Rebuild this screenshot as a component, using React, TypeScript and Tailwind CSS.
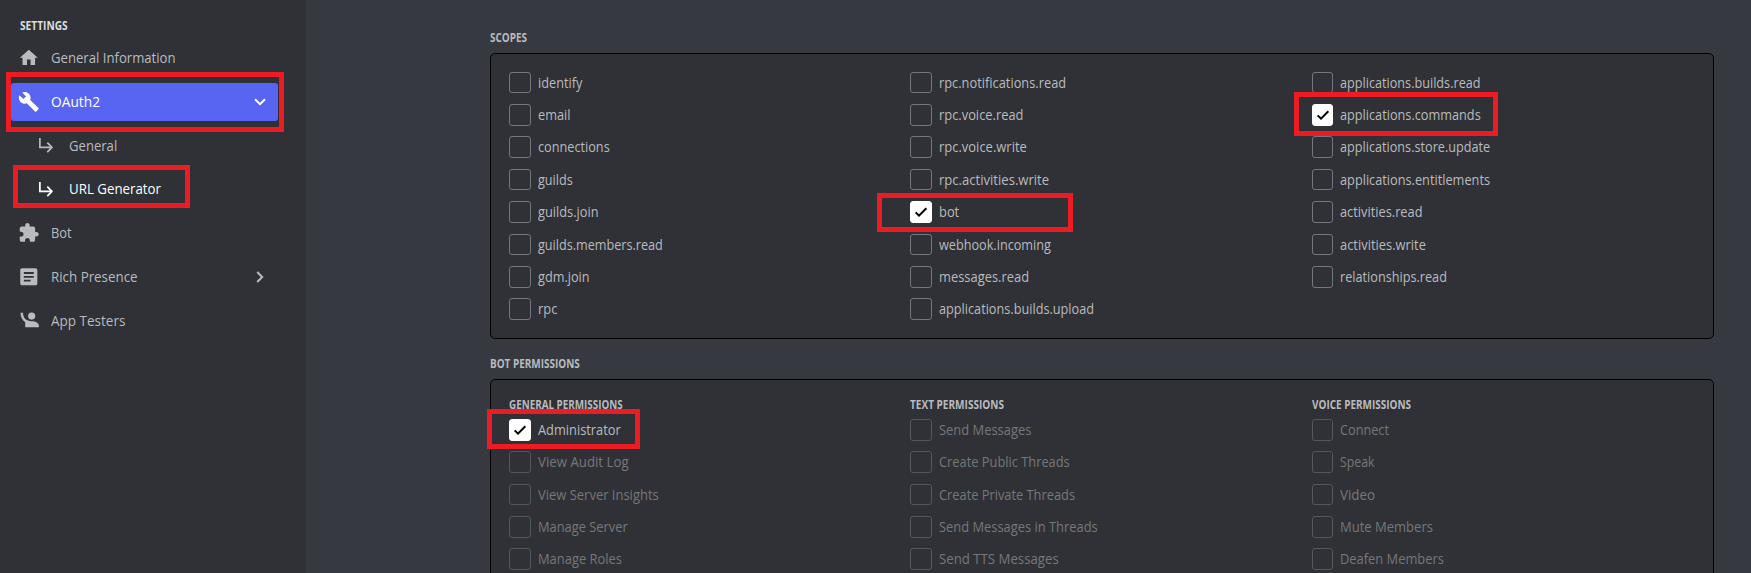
import React from "react";

type Item = { label: string; width: number; checked?: boolean };

const scopes: Item[][] = [
  [
    { label: "identify", width: 44.3 },
    { label: "email", width: 32 },
    { label: "connections", width: 72 },
    { label: "guilds", width: 35 },
    { label: "guilds.join", width: 60 },
    { label: "guilds.members.read", width: 124.3 },
    { label: "gdm.join", width: 51 },
    { label: "rpc", width: 18.7 },
  ],
  [
    { label: "rpc.notifications.read", width: 125.7 },
    { label: "rpc.voice.read", width: 83 },
    { label: "rpc.voice.write", width: 87 },
    { label: "rpc.activities.write", width: 109.3 },
    { label: "bot", width: 19.3, checked: true },
    { label: "webhook.incoming", width: 112.3 },
    { label: "messages.read", width: 88.6 },
    { label: "applications.builds.upload", width: 154.5 },
  ],
  [
    { label: "applications.builds.read", width: 140 },
    { label: "applications.commands", width: 141, checked: true },
    { label: "applications.store.update", width: 150.3 },
    { label: "applications.entitlements", width: 150.3 },
    { label: "activities.read", width: 82 },
    { label: "activities.write", width: 86 },
    { label: "relationships.read", width: 105.5 },
  ],
];

const permissions: { title: string; width: number; items: Item[] }[] = [
  {
    title: "GENERAL PERMISSIONS",
    width: 114,
    items: [
      { label: "Administrator", width: 83, checked: true },
      { label: "View Audit Log", width: 91 },
      { label: "View Server Insights", width: 121 },
      { label: "Manage Server", width: 89 },
      { label: "Manage Roles", width: 83.3 },
    ],
  },
  {
    title: "TEXT PERMISSIONS",
    width: 94.3,
    items: [
      { label: "Send Messages", width: 92.7 },
      { label: "Create Public Threads", width: 131 },
      { label: "Create Private Threads", width: 136.3 },
      { label: "Send Messages in Threads", width: 159 },
      { label: "Send TTS Messages", width: 120 },
    ],
  },
  {
    title: "VOICE PERMISSIONS",
    width: 99.3,
    items: [
      { label: "Connect", width: 49 },
      { label: "Speak", width: 35 },
      { label: "Video", width: 34.7 },
      { label: "Mute Members", width: 92.3 },
      { label: "Deafen Members", width: 103.3 },
    ],
  },
];

const ruler = document.createElement("canvas").getContext("2d");

// Horizontal scale that makes the text's ink span the given width.
function condense(text: string, width: number, font: string) {
  if (!ruler) return 1;
  ruler.font = font;
  const m = ruler.measureText(text);
  return width / (m.actualBoundingBoxRight + m.actualBoundingBoxLeft);
}

function Fit({ text, width, bold }: { text: string; width: number; bold?: boolean }) {
  const font = bold ? '700 12px "Open Sans"' : '400 14px "Open Sans"';
  return (
    <span
      className="inline-block origin-left whitespace-nowrap"
      style={{ transform: `scaleX(${condense(text, width, font)})` }}
    >
      {text}
    </span>
  );
}

function Check({ item, muted }: { item: Item; muted?: boolean }) {
  const dim = muted && !item.checked;
  return (
    <div className="flex h-[32.35px] items-start">
      <div
        className={
          "flex h-[21.65px] w-[21.6px] shrink-0 items-center justify-center rounded-[3px] border " +
          (item.checked ? "border-white bg-white" : dim ? "border-[#54575c]" : "border-[#72767d]")
        }
      >
        {item.checked && (
          <svg viewBox="0 0 24 24" className="h-[16px] w-[16px] shrink-0" fill="none" stroke="#000" strokeWidth="2.9">
            <path d="M4 12.6 9 17.6 20 6.4" />
          </svg>
        )}
      </div>
      <span className={"ml-[7.1px] text-[14px] leading-[21.6px] " + (dim ? "text-[#76777b]" : "text-[#b9bbbe]")}>
        <Fit text={item.label} width={item.width} />
      </span>
    </div>
  );
}

function NavRow({ icon, label, width, trailing, active, sub, bright }: {
  icon: React.ReactNode;
  label: string;
  width: number;
  trailing?: React.ReactNode;
  active?: boolean;
  sub?: boolean;
  bright?: boolean;
}) {
  return (
    <div
      className={
        "flex items-center rounded-[3px] " +
        (active ? "bg-[#5865f2] text-white" : bright ? "text-white" : "text-[#b9bbbe]") +
        (sub ? " h-[37.6px] pl-[28.3px]" : " h-[38px] pl-[7px]")
      }
    >
      {icon}
      <span className={"text-[14px] leading-5 " + (sub ? "ml-[15.6px]" : "ml-[11.3px]")}>
        <Fit text={label} width={width} />
      </span>
      {trailing}
    </div>
  );
}

function Icon({ d }: { d: string }) {
  return (
    <svg viewBox="0 0 24 24" className="h-[21.6px] w-[21.6px] shrink-0" fill="currentColor">
      <path d={d} />
    </svg>
  );
}

function SubArrow() {
  return (
    <svg viewBox="0 0 14 15" className="h-[15px] w-[14px] shrink-0" fill="none" stroke="currentColor" strokeWidth="1.7">
      <path d="M.9 0V9.400H12.500M8.300 4.600 12.900 9.400 8.300 14.200" />
    </svg>
  );
}

const HOME = "M10 20v-6h4v6h5v-8h3L12 3 2 12h3v8z";
const WRENCH =
  "M22.7 19l-9.1-9.1c.9-2.3.4-5-1.5-6.9-2-2-5-2.4-7.4-1.3L9 6 6 9 1.6 4.7C.4 7.1.9 10.1 2.9 12.1c1.9 1.9 4.6 2.4 6.9 1.5l9.1 9.1c.4.4 1 .4 1.4 0l2.3-2.3c.5-.4.5-1.1.1-1.4z";
const PUZZLE =
  "M20.5 11H19V7c0-1.1-.9-2-2-2h-4V3.500C13 2.120 11.880 1 10.500 1S8 2.120 8 3.500V5H4c-1.100 0-1.990.9-1.990 2v3.800H3.500c1.490 0 2.700 1.210 2.700 2.700s-1.210 2.700-2.700 2.700H2V20c0 1.100.9 2 2 2h3.800v-1.500c0-1.490 1.210-2.700 2.700-2.700 1.490 0 2.700 1.210 2.700 2.700V22H17c1.100 0 2-.9 2-2v-4h1.500c1.380 0 2.500-1.120 2.500-2.500S21.880 11 20.500 11z";
const ARTICLE =
  "M19.500 2.500H4.500c-1.100 0-2 .9-2 2v15c0 1.100.9 2 2 2h15c1.100 0 2-.9 2-2v-15c0-1.100-.9-2-2-2zM14 17.200H6.500v-2H14v2zM17.500 13H6.500v-2h11v2zM17.500 8.800H6.500v-2h11v2z";
const PERSON =
  "M15.200 10.700a4 4 0 1 0 0-8 4 4 0 0 0 0 8zM2.800 3h2.700c0 4 1.800 7 5 8.500 1.400.7 2.900.9 4.700.9 4.600 0 8 2.100 8 4.800V19.200H8v-5.700C4.800 11.500 2.800 7.500 2.800 3z";

export default function App() {
  return (
    <div className="relative flex h-[573px] w-[1751px] overflow-hidden bg-[#36393f] font-['Open_Sans','Noto_Sans',sans-serif]">
      <aside className="w-[306px] shrink-0 bg-[#2f3136] pr-[28px] pl-[11px] pt-[18px]">
        <h2 className="h-[16px] pl-[9px] text-[12px] leading-4 font-bold text-[#dcddde]">
          <Fit text="SETTINGS" width={48} bold />
        </h2>
        <nav className="mt-[5px] flex flex-col gap-[5.9px]">
          <NavRow icon={<Icon d={HOME} />} label="General Information" width={124} />
          <NavRow
            icon={<Icon d={WRENCH} />}
            label="OAuth2"
            width={49}
            active
            trailing={
              <svg viewBox="0 0 12 8" className="mr-[12px] ml-auto h-[8px] w-[12px]" fill="none" stroke="currentColor" strokeWidth="2">
                <path d="M1 1.200 6 6.200 11 1.200" />
              </svg>
            }
          />
          <NavRow icon={<SubArrow />} label="General" width={47.7} sub />
          <NavRow icon={<SubArrow />} label="URL Generator" width={91.3} sub bright />
          <NavRow icon={<Icon d={PUZZLE} />} label="Bot" width={19.7} />
          <NavRow
            icon={<Icon d={ARTICLE} />}
            label="Rich Presence"
            width={85.7}
            trailing={
              <svg viewBox="0 0 8 12" className="mr-[14px] ml-auto h-[12px] w-[8px]" fill="none" stroke="currentColor" strokeWidth="2">
                <path d="M1.200 1 6.200 6 1.200 11" />
              </svg>
            }
          />
          <NavRow icon={<Icon d={PERSON} />} label="App Testers" width={74.7} />
        </nav>
      </aside>

      <main className="w-[1408px] shrink-0 pt-[30px] pl-[184px]">
        <h3 className="h-[16px] text-[12px] leading-4 font-bold text-[#b9bbbe]">
          <Fit text="SCOPES" width={37.3} bold />
        </h3>
        <section className="mt-[7px] flex h-[286px] rounded-[5px] border border-black bg-[#2f3136] pt-[17.8px] pl-[18px]">
          {scopes.map((column, i) => (
            <div key={i} className="w-[401.4px] shrink-0">
              {column.map((item) => (
                <Check key={item.label} item={item} />
              ))}
            </div>
          ))}
        </section>
        <h3 className="mt-[17px] h-[16px] text-[12px] leading-4 font-bold text-[#b9bbbe]">
          <Fit text="BOT PERMISSIONS" width={89.3} bold />
        </h3>
        <section className="mt-[7px] flex h-[286px] rounded-[5px] border border-black bg-[#2f3136] pt-[17px] pl-[18px]">
          {permissions.map((group) => (
            <div key={group.title} className="w-[401.4px] shrink-0">
              <h4 className="h-[22.1px] text-[12px] leading-4 font-bold text-[#b9bbbe]">
                <Fit text={group.title} width={group.width} bold />
              </h4>
              {group.items.map((item) => (
                <Check key={item.label} item={item} muted />
              ))}
            </div>
          ))}
        </section>
      </main>

      <div className="absolute top-[72px] left-[6px] h-[60px] w-[278px] border-5 border-[#ed1c24]" />
      <div className="absolute top-[165px] left-[13px] h-[43px] w-[177px] border-5 border-[#ed1c24]" />
      <div className="absolute top-[92px] left-[1294px] h-[44px] w-[204px] border-5 border-[#ed1c24]" />
      <div className="absolute top-[193px] left-[877px] h-[39px] w-[196px] border-5 border-[#ed1c24]" />
      <div className="absolute top-[409px] left-[487px] h-[40px] w-[153px] border-5 border-[#ed1c24]" />
    </div>
  );
}
